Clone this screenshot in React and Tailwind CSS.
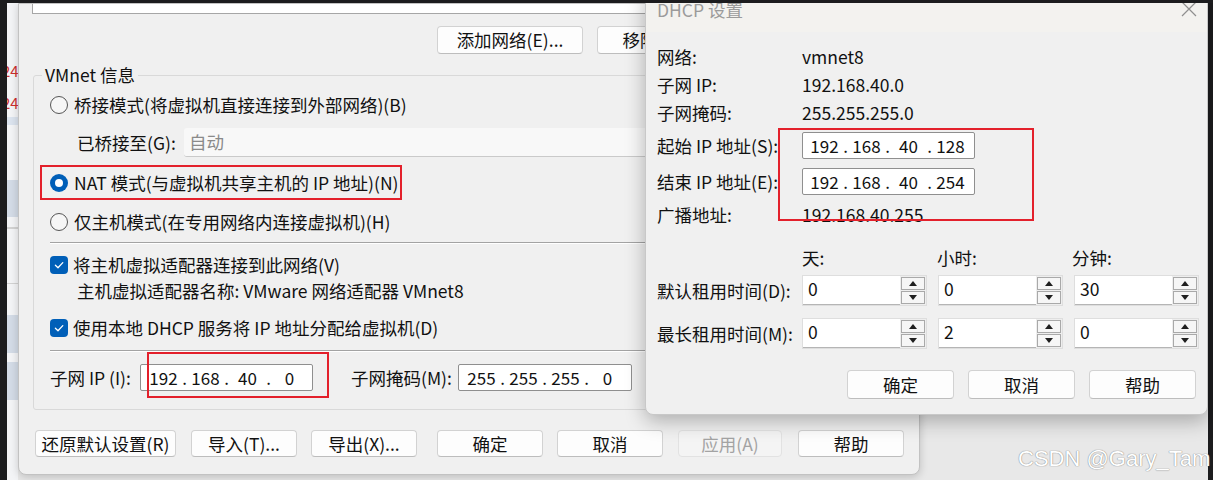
import React from "react";

function Btn({ children, w = "w-[106px]", disabled, cls = "" }) {
  return (
    <div
      className={`${w} ${cls} h-full shrink-0 flex items-center justify-center rounded-[4px] border ${
        disabled
          ? "border-[#e2e2e2] bg-[#f4f4f4] text-[#a3a3a3]"
          : "border-[#d2d2d2] border-b-[#bdbdbd] bg-[#fdfdfd] text-[#111111]"
      }`}
    >
      {children}
    </div>
  );
}

function Radio({ checked }) {
  return checked ? (
    <div className="w-[18px] h-[18px] rounded-full bg-[#005fb8] flex items-center justify-center shrink-0">
      <div className="w-[8px] h-[8px] rounded-full bg-white" />
    </div>
  ) : (
    <div className="w-[18px] h-[18px] rounded-full border border-[#555555] bg-[#f6f6f6] shrink-0" />
  );
}

function Check() {
  return (
    <div className="w-[18px] h-[18px] rounded-[4px] bg-[#005fb8] flex items-center justify-center shrink-0">
      <svg width="12" height="12" viewBox="0 0 12 12">
        <path
          d="M2.4 6.3 L5 8.7 L9.8 3.6"
          fill="none"
          stroke="white"
          strokeWidth="1.3"
          strokeLinecap="round"
          strokeLinejoin="round"
        />
      </svg>
    </div>
  );
}

function IpField({ parts, w = "w-[173px]", pl = "pl-[4px]" }) {
  return (
    <div className={`${w} ${pl} h-full shrink-0 bg-white border border-[#8f8f8f] rounded-[2px] flex items-center text-[#111111] text-[17px]`}>
      {parts.map((p, i) => (
        <React.Fragment key={i}>
          {i > 0 && <span className="w-[5px] text-center">.</span>}
          <span className="w-[37px] text-center">{p}</span>
        </React.Fragment>
      ))}
    </div>
  );
}

function Spin({ v }) {
  return (
    <div className="w-[125px] h-full flex border border-[#dedede] shrink-0">
      <div className="flex-1 bg-white border-b border-[#b5b5b5] flex items-center pl-[5px] pb-[2px] text-[#111111]">{v}</div>
      <div className="w-[26px] flex flex-col gap-[1px] p-[1px] bg-[#eeeeee]">
        <div className="flex-1 border border-[#a9a9a9] bg-[#f6f6f6] flex items-center justify-center">
          <svg width="8" height="5" viewBox="0 0 8 5">
            <path d="M0 5 L4 0 L8 5Z" fill="#1f1f1f" />
          </svg>
        </div>
        <div className="flex-1 border border-[#a9a9a9] bg-[#f6f6f6] flex items-center justify-center">
          <svg width="8" height="5" viewBox="0 0 8 5">
            <path d="M0 0 L4 5 L8 0Z" fill="#1f1f1f" />
          </svg>
        </div>
      </div>
    </div>
  );
}

function LeaseRow({ label, vals, cls }) {
  return (
    <div className={`${cls} h-[31px] flex items-center`}>
      <span className="w-[145px] shrink-0 whitespace-nowrap">{label}</span>
      <div className="h-full flex gap-[11px]">
        {vals.map((v, i) => (
          <Spin key={i} v={v} />
        ))}
      </div>
    </div>
  );
}

export default function App() {
  return (
    <div className="relative w-[1213px] h-[480px] overflow-hidden bg-[#1c1c1e] text-[17.5px] leading-none text-[#111111] font-['Noto_Sans_CJK_SC','Noto_Sans',sans-serif]">
      {/* window behind */}
      <div className="absolute left-[7px] top-0 w-[1201px] h-[480px] bg-[#e8e8e8] flex">
        <div className="w-[11px] h-full flex flex-col bg-[#f3f4f6] overflow-hidden">
          <div className="h-[61px] shrink-0" />
          <div className="h-[30px] shrink-0 leading-[20px] text-[15px] text-[#cc2f2f] -ml-[5px] whitespace-nowrap">24</div>
          <div className="h-[26px] shrink-0 leading-[24px] text-[15px] text-[#cc2f2f] -ml-[5px] whitespace-nowrap">24</div>
          <div className="h-[8px] shrink-0 bg-[#dbe3ee]" />
          <div className="h-[55px] shrink-0" />
          <div className="h-[37px] shrink-0 bg-[#d3dbe6]" />
          <div className="h-[10px] shrink-0" />
          <div className="h-[2px] shrink-0 bg-[#d2d2d2]" />
          <div className="h-[54px] shrink-0" />
          <div className="h-[1px] shrink-0 bg-[#d2d2d2]" />
          <div className="h-[31px] shrink-0" />
          <div className="h-[38px] shrink-0 bg-[#d3dbe6]" />
          <div className="h-[9px] shrink-0" />
          <div className="h-[38px] shrink-0 bg-[#d3dbe6]" />
        </div>
      </div>

      {/* main dialog */}
      <div className="absolute left-[18px] top-[3px] w-[902px] h-[472px] bg-[#f0f0f0] border border-[#c2c2c2] rounded-b-[8px] shadow-[0_2px_8px_rgba(0,0,0,0.18)] flex flex-col pl-[14px] pr-[15px]">
        <div className="-ml-px h-[10px] shrink-0 bg-white border-x border-b border-[#a6a6a6]" />
        <div className="mt-[12px] h-[28px] shrink-0 flex gap-[14px] pl-[404px]">
          <Btn w="w-[146px]">添加网络(E)...</Btn>
          <Btn w="w-[146px]">移除网络(O)</Btn>
        </div>
        <fieldset className="mt-[10px] border border-[#d9d9d9] rounded-[3px] px-[16px] pt-[4px] pb-[18px] flex flex-col">
          <legend className="h-[22px] leading-[22px] px-[3px] -ml-[8px]">VMnet 信息</legend>
          <div className="h-[30px] flex items-center gap-[6px]">
            <Radio />
            <span>桥接模式(将虚拟机直接连接到外部网络)(B)</span>
          </div>
          <div className="mt-[8px] h-[29px] flex items-center pl-[27px]">
            <span className="w-[107px] shrink-0">已桥接至(G):</span>
            <div className="flex-1 h-full bg-[#f8f8f8] border-b border-[#cacaca] rounded-[3px] flex items-center pl-[5px] text-[#8a8a8a]">
              自动
            </div>
          </div>
          <div className="mt-[11px] h-[30px] flex items-center gap-[6px]">
            <Radio checked />
            <span>NAT 模式(与虚拟机共享主机的 IP 地址)(N)</span>
          </div>
          <div className="mt-[9px] h-[30px] flex items-center gap-[6px]">
            <Radio />
            <span>仅主机模式(在专用网络内连接虚拟机)(H)</span>
          </div>
          <div className="mt-[5px] h-[2px] border-t border-b border-t-[#a3a3a3] border-b-white" />
          <div className="mt-[7px] h-[28px] flex items-center gap-[5px]">
            <Check />
            <span>将主机虚拟适配器连接到此网络(V)</span>
          </div>
          <div className="h-[24px] flex items-center pl-[27px]">主机虚拟适配器名称: VMware 网络适配器 VMnet8</div>
          <div className="mt-[11px] h-[28px] flex items-center gap-[5px]">
            <Check />
            <span>使用本地 DHCP 服务将 IP 地址分配给虚拟机(D)</span>
          </div>
          <div className="mt-[8px] h-[2px] border-t border-b border-t-[#a3a3a3] border-b-white" />
          <div className="mt-[12px] h-[27px] flex items-center">
            <span className="w-[90px] shrink-0">子网 IP (I):</span>
            <IpField parts={["192", "168", "40", "0"]} w="w-[173px]" pl="pl-[4px]" />
            <span className="ml-[38px] w-[107px] shrink-0">子网掩码(M):</span>
            <IpField parts={["255", "255", "255", "0"]} w="w-[174px]" pl="pl-[4px]" />
          </div>
        </fieldset>
        <div className="mt-[20px] h-[27px] shrink-0 flex pl-[2px]">
          <Btn w="w-[141px]">还原默认设置(R)</Btn>
          <Btn cls="ml-[15px]">导入(T)...</Btn>
          <Btn cls="ml-[14px]">导出(X)...</Btn>
          <Btn cls="ml-[20px]">确定</Btn>
          <Btn cls="ml-[14px]">取消</Btn>
          <Btn cls="ml-[15px]" w="w-[104px]" disabled>
            应用(A)
          </Btn>
          <Btn cls="ml-[16px]">帮助</Btn>
        </div>
      </div>

      {/* annotation boxes on main dialog */}
      <div className="absolute left-[40px] top-[165px] w-[362px] h-[35px] border-2 border-[#e3202b] z-[5]" />
      <div className="absolute left-[147px] top-[352px] w-[182px] h-[46px] border-2 border-[#e3202b] z-[5]" />

      {/* DHCP dialog */}
      <div className="absolute left-[645px] top-[-10px] w-[563px] h-[425px] bg-[#f0f0f0] border border-[#c8c8c8] rounded-b-[8px] shadow-[0_6px_20px_rgba(0,0,0,0.28)] flex flex-col z-10">
        <div className="h-[41px] shrink-0 bg-[#f3f2ef] flex justify-between items-start pl-[11px] pr-[10px] pt-[7px]">
          <span className="leading-[24px] text-[#9b9b9b]">DHCP 设置</span>
          <svg className="mt-[3px]" width="16" height="16" viewBox="0 0 16 16">
            <path d="M1 1 L15 15 M15 1 L1 15" stroke="#8f8f8f" strokeWidth="1.2" />
          </svg>
        </div>
        <div className="flex flex-col pl-[11px] pr-[11px] pt-[11px]">
          <div className="h-[28px] flex items-center">
            <span className="w-[145px] shrink-0">网络:</span>
            <span>vmnet8</span>
          </div>
          <div className="h-[28px] flex items-center">
            <span className="w-[145px] shrink-0">子网 IP:</span>
            <span>192.168.40.0</span>
          </div>
          <div className="h-[28px] flex items-center">
            <span className="w-[145px] shrink-0">子网掩码:</span>
            <span>255.255.255.0</span>
          </div>
          <div className="mt-[5px] h-[27px] flex items-center">
            <span className="w-[145px] shrink-0 whitespace-nowrap">起始 IP 地址(S):</span>
            <IpField parts={["192", "168", "40", "128"]} w="w-[173px]" pl="pl-[3px]" />
          </div>
          <div className="mt-[9px] h-[27px] flex items-center">
            <span className="w-[145px] shrink-0 whitespace-nowrap">结束 IP 地址(E):</span>
            <IpField parts={["192", "168", "40", "254"]} w="w-[173px]" pl="pl-[3px]" />
          </div>
          <div className="mt-[6px] h-[28px] flex items-center">
            <span className="w-[145px] shrink-0">广播地址:</span>
            <span>192.168.40.255</span>
          </div>
          <div className="mt-[16px] h-[26px] flex items-center pl-[145px] gap-[11px]">
            <span className="w-[125px]">天:</span>
            <span className="w-[125px]">小时:</span>
            <span className="w-[125px]">分钟:</span>
          </div>
          <LeaseRow cls="mt-[4px]" label="默认租用时间(D):" vals={["0", "0", "30"]} />
          <LeaseRow cls="mt-[12px]" label="最长租用时间(M):" vals={["0", "2", "0"]} />
          <div className="mt-[21px] h-[29px] flex justify-end gap-[14px]">
            <Btn w="w-[107px]">确定</Btn>
            <Btn w="w-[107px]">取消</Btn>
            <Btn w="w-[107px]">帮助</Btn>
          </div>
        </div>
      </div>

      <div className="absolute left-[778px] top-[128px] w-[256px] h-[93px] border-2 border-[#e3202b] z-20" />

      {/* watermark */}
      <div className="absolute left-[1018px] top-[446px] z-30 whitespace-nowrap text-[22px] leading-[26px] text-white font-['Liberation_Sans',sans-serif] [text-shadow:0_0_1px_#8a8a8a,0_0_1px_#8a8a8a]">
        CSDN @Gary_Tam
      </div>

      {/* top dark strip */}
      <div className="absolute left-0 top-0 w-full h-[3px] bg-[#1c1c1e] z-40" />
    </div>
  );
}
